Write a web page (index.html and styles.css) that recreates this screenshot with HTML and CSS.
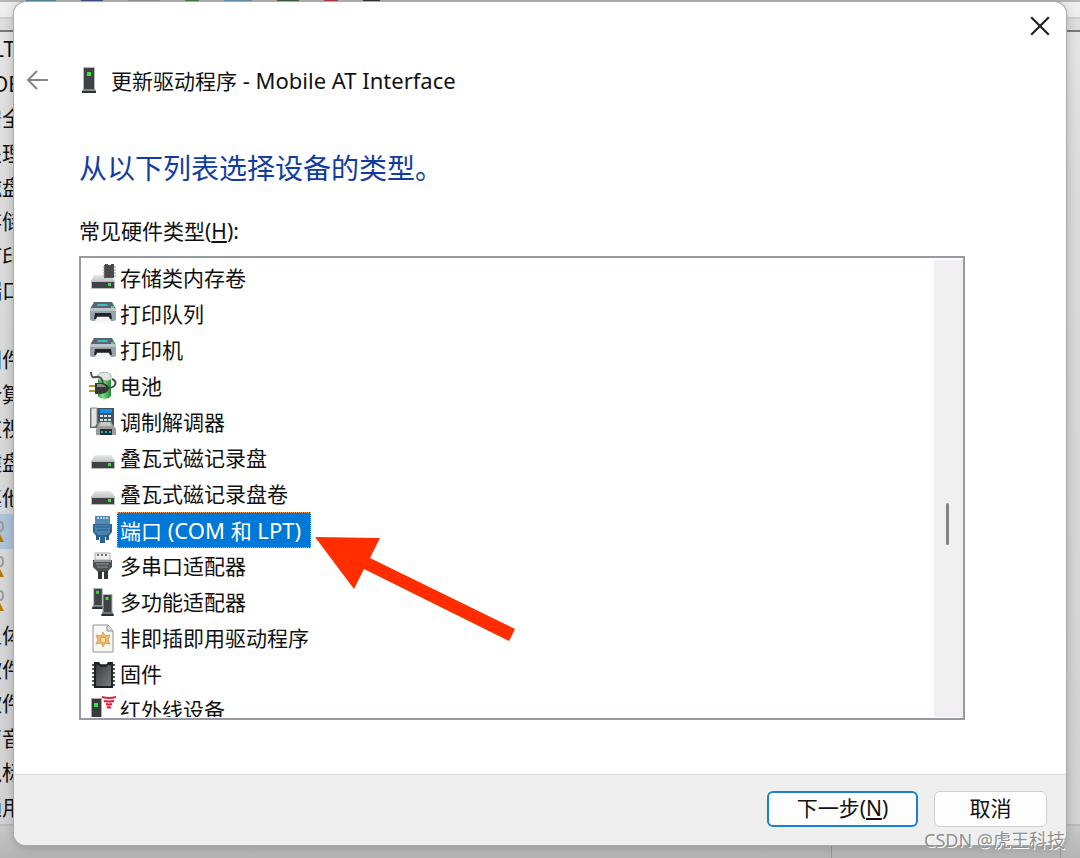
FILE: index.html
```html
<!DOCTYPE html>
<html lang="zh-CN">
<head>
<meta charset="utf-8">
<meta name="viewport" content="width=device-width, initial-scale=1">
<title>更新驱动程序</title>
<link rel="stylesheet" href="styles.css">
</head>
<body>
<svg class="defs" aria-hidden="true">
  <defs>
    <linearGradient id="lid" x1="0" y1="0" x2="0" y2="1"><stop offset="0" stop-color="#e9e9ea"/><stop offset="1" stop-color="#c3c5c7"/></linearGradient>
    <linearGradient id="dark" x1="0" y1="0" x2="1" y2="1"><stop offset="0" stop-color="#3a3b3c"/><stop offset="1" stop-color="#7c7d7e"/></linearGradient>
    <linearGradient id="cell" x1="0" y1="0" x2="1" y2="0"><stop offset="0" stop-color="#2b9a3c"/><stop offset=".35" stop-color="#7fe07f"/><stop offset="1" stop-color="#1f8a30"/></linearGradient>
    <symbol id="drive" viewBox="0 0 28 36">
      <path d="M6 15h16l4 6H2z" fill="url(#lid)"/>
      <path d="M2 21h24v8H2z" fill="#b9bcbe"/><path d="M3 22h22v6H3z" fill="#3f4142"/>
      <path d="M19 23h3v3h-3z" fill="#3be04a"/>
    </symbol>
    <symbol id="printer" viewBox="0 0 28 36">
      <path d="M5 6h18l4 7H1z" fill="#58676f"/><path d="M9 8h9l1 2H8z" fill="#38c3c0"/><path d="M22 10h3v2h-3z" fill="#42e05a"/>
      <path d="M1 12h26v12l-2 1H3l-2-1z" fill="#98a2ac"/><path d="M1 12h26v3H1z" fill="#bcc5cd"/>
      <path d="M6 17h16l1 6H5z" fill="#202325"/><path d="M8 21h12l3 6H5z" fill="#f4f5f6"/><path d="M8 20h12v1H8z" fill="#55595c"/>
    </symbol>
    <symbol id="tower" viewBox="0 0 12 22">
      <path d="M1 0h10v18H1z" fill="#aeb5b9"/><path d="M2 1h8v17H2z" fill="#3f4142"/>
      <path d="M4 3h3v3H4z" fill="#39e33e"/><path d="M1 18h10l1 2v2H0v-2z" fill="#6f7578"/><path d="M0 20h12v2H0z" fill="#2c2e2f"/>
    </symbol>
    <symbol id="device" viewBox="0 0 14 34">
      <path d="M0 8c4 0 4 9 0 9" fill="none" stroke="#999" stroke-width="2"/><path d="M0 20l4 8H0z" fill="#b87900"/>
    </symbol>
  </defs>
</svg>

<div class="backdrop" aria-hidden="true">
  <div class="tool-strip"><i class="teal"></i><i class="navy"></i><i class="line"></i><i class="green"></i><i class="sky"></i><i class="forest"></i><i class="red"></i><i class="black"></i></div>
  <div class="tree">
    <span class="latin">LT</span><span class="latin">DE</span><span>安全</span><span>处理</span><span>磁盘</span><span>存储</span><span>打印</span><span>端口</span><span></span><span>固件</span><span>计算</span><span>监视</span><span>键盘</span><span>其他</span>
    <span class="picked device"><svg><use href="#device"/></svg></span>
    <span class="device"><svg><use href="#device"/></svg></span>
    <span class="device"><svg><use href="#device"/></svg></span>
    <span>人体</span><span>软件</span><span>软件</span><span>声音</span><span>鼠标</span><span>通用</span>
  </div>
  <div class="status"><i></i><i></i></div>
</div>

<main class="dialog" role="dialog" aria-labelledby="title">
  <header class="caption">
    <button class="close" type="button" aria-label="关闭"><svg viewBox="0 0 20 20"><path d="M2 2l16 16M18 2L2 18" fill="none" stroke="#222" stroke-width="2"/></svg></button>
  </header>
  <div class="title-row">
    <button class="back" type="button" aria-label="返回"><svg viewBox="0 0 24 24"><path d="M22 12H3M11 3l-9 9 9 9" fill="none" stroke="#858585" stroke-width="2"/></svg></button>
    <svg class="title-icon" viewBox="0 0 14 26"><path d="M1 0h12v23H1z" fill="#b4babd"/><path d="M2 1h10v21H2z" fill="#404142"/><path d="M5 5h4v4H5z" fill="#33ee38"/><path d="M1 22h12l1 2v2H0v-2z" fill="#858b8e"/><path d="M0 24h14v2H0z" fill="#303233"/></svg>
    <h1 id="title" class="title">更新驱动程序<span class="latin-text"> - Mobile AT Interface</span></h1>
  </div>

  <section class="content">
    <h2 class="heading">从以下列表选择设备的类型。</h2>
    <div id="types-label" class="list-label">常见硬件类型(<u>H</u>):</div>
    <div class="listbox">
      <ul class="items" role="listbox" aria-labelledby="types-label" tabindex="0">
        <li class="item" role="option"><svg class="icon" viewBox="0 0 28 36"><path d="M5 15h16l5 6H2z" fill="url(#lid)"/><path d="M15 5h10v13H15z" fill="#555"/><path d="M14 7h13M14 10h13M14 13h13M14 16h13" stroke="#8b8b8b" stroke-width="1"/><path d="M16 4h3v2h3V4h3v13h-9z" fill="#4a4a4a"/><path d="M2 21h24v8H2z" fill="#b9bcbe"/><path d="M3 22h22v6H3z" fill="#3f4142"/><path d="M19 23h3v3h-3z" fill="#3be04a"/></svg><span class="name">存储类内存卷</span></li>
        <li class="item" role="option"><svg class="icon"><use href="#printer"/></svg><span class="name">打印队列</span></li>
        <li class="item" role="option"><svg class="icon"><use href="#printer"/></svg><span class="name">打印机</span></li>
        <li class="item" role="option"><svg class="icon" viewBox="0 0 28 36"><path d="M9 9c0-6 13-6 13 0v18c0 5-13 5-13 0z" fill="url(#cell)"/><path d="M9 8c0-5 13-5 13 0v3c-2 2-11 2-13 0z" fill="#e1e8e3" stroke="#a9b3ab"/><path d="M2 4c0 5 2 6 5 5 4-1 7 2 7 7M23 11c5 2 5 8-3 9" fill="none" stroke="#4b504c" stroke-width="2"/><path d="M6 15h5c5 0 9 2 9 5s-4 6-9 6H6z" fill="#343836"/><path d="M8 16h3c3 0 5 1 6 3H8z" fill="#8a8f8c"/><path d="M0 17h6v2H0zM0 22h6v2H0z" fill="#b79427"/></svg><span class="name">电池</span></li>
        <li class="item" role="option"><svg class="icon" viewBox="0 0 28 36"><path d="M1 4h24v20H1z" fill="#45515a"/><path d="M2 4h6v16l-2 3H2z" fill="#e1e3e5" stroke="#818a90"/><path d="M11 5h12v4H11z" fill="#168de8"/><path d="M11 11h3v2h-3zM15 11h3v2h-3zM19 11h3v2h-3zM11 15h3v2h-3zM15 15h3v2h-3zM19 15h3v2h-3z" fill="#d9e2e7"/><path d="M10 18h12l5 7v6H7v-6z" fill="#9b9b9a"/><path d="M12 18h9l2 4H10z" fill="#c7c7c5"/><path d="M11 25h12v6H11z" fill="#252b2f"/><path d="M12 27h2v2h-2zM16 27h2v2h-2zM20 27h2v2h-2z" fill="#16b5cf"/><path d="M21 18h2v2h-2z" fill="#37e145"/></svg><span class="name">调制解调器</span></li>
        <li class="item" role="option"><svg class="icon"><use href="#drive"/></svg><span class="name">叠瓦式磁记录盘</span></li>
        <li class="item" role="option"><svg class="icon"><use href="#drive"/></svg><span class="name">叠瓦式磁记录盘卷</span></li>
        <li class="item selected" role="option" aria-selected="true"><svg class="icon" viewBox="0 0 28 36"><path d="M6 4h15v8H6z" fill="#5389b3"/><path d="M8 5h2v2H8zM11 5h2v2h-2zM14 5h2v2h-2zM17 5h2v2h-2z" fill="#b6d1e3"/><path d="M4 12h19v8l-4 5h-3v6h-5v-6H8l-4-5z" fill="#2c6594"/><path d="M6 13h15v7l-3 3H9l-3-3z" fill="#4782b0"/><path d="M7 15h13M8 18h11" stroke="#265c88"/><path d="M7 23h3v5H7zM17 23h3v5h-3z" fill="#255d8c"/></svg><span class="name">端口<span class="latin-text"> (COM </span>和<span class="latin-text"> LPT)</span></span></li>
        <li class="item" role="option"><svg class="icon" viewBox="0 0 28 36"><path d="M6 5h15v7H6z" fill="#eeeeee" stroke="#aaa"/><path d="M8 6h2v2H8zM12 6h2v2h-2zM16 6h2v2h-2z" fill="#777"/><path d="M4 12h19v7l-5 5H9l-5-5z" fill="#4f5152"/><path d="M5 12h17v2H5z" fill="#969899"/><path d="M7 16h13M8 19h11" stroke="#929494"/><path d="M9 23h4v8H9zM15 23h4v8h-4z" fill="#353738"/></svg><span class="name">多串口适配器</span></li>
        <li class="item" role="option"><svg class="icon" viewBox="0 0 28 36"><use href="#tower" x="3" y="4" width="12" height="21"/><use href="#tower" x="12" y="10" width="13" height="22"/></svg><span class="name">多功能适配器</span></li>
        <li class="item" role="option"><svg class="icon" viewBox="0 0 28 36"><path d="M4 5h15l5 6v21H4z" fill="#f8f8f8" stroke="#929292"/><path d="M18 5v6h6" fill="#ddd" stroke="#929292"/><path d="M14 12l2 4 5-1-2 5 2 4-5-1-2 4-2-4-5 1 2-4-2-5 5 1z" fill="#edbd70" stroke="#dda350"/><circle cx="14" cy="20" r="3" fill="#f9dfae" stroke="#d69a42"/></svg><span class="name">非即插即用驱动程序</span></li>
        <li class="item" role="option"><svg class="icon" viewBox="0 0 28 36"><path d="M3 9h23M3 13h23M3 17h23M3 21h23M3 25h23M3 29h23" stroke="#555" stroke-width="2"/><path d="M5 6h5l2 3h5l2-3h5v26H5z" fill="#202122"/><path d="M7 9h3l2 2h5l2-2h3v21H7z" fill="url(#dark)"/></svg><span class="name">固件</span></li>
        <li class="item" role="option"><svg class="icon" viewBox="0 0 28 36"><path d="M2 6h11v22H2z" fill="#aaa"/><path d="M3 7h9v21H3z" fill="#383a3b"/><path d="M5 11h4v4H5z" fill="#31e64e"/><path d="M13 5q7 2 14 0M15 9q5 1 10 0M17 12q3 1 6 0M18 15q2 1 4 0" fill="none" stroke="#e21e3b" stroke-width="2"/></svg><span class="name">红外线设备</span></li>
      </ul>
      <div class="scrollbar" aria-hidden="true"><div class="thumb"></div></div>
    </div>
  </section>

  <footer class="actions">
    <button class="button primary" type="button">下一步(<u>N</u>)</button>
    <button class="button" type="button">取消</button>
  </footer>
</main>

<svg class="arrow" viewBox="0 0 200 104" aria-hidden="true"><path d="M0 0l65 1-10 20 145 71-6 12L49 32 39 52z" fill="#ff2d00"/></svg>
<div class="watermark">CSDN @虎王科技</div>
</body>
</html>
```

FILE: styles.css
```css
* { box-sizing: border-box; }

body {
  margin: 0;
  min-height: 100vh;
  padding: 2px 14px 13px;
  display: flex;
  position: relative;
  overflow: hidden;
  background: #bdbdbd;
  color: #111;
  font-family: "Noto Sans", "Noto Sans CJK SC", sans-serif;
  font-size: 21px;
}

h1, h2, ul { margin: 0; padding: 0; font-weight: 400; }
button { font: inherit; color: inherit; }
u { text-decoration-thickness: 2px; text-underline-offset: 2px; }

.defs { position: absolute; width: 0; height: 0; }
.latin-text { font-size: 22px; }

/* Window behind the dialog */
.backdrop {
  position: absolute;
  inset: 0;
  display: flex;
  flex-direction: column;
  background: linear-gradient(#e8e8e8, #dcdcdc 20%, #d2d2d2);
}
.tool-strip {
  height: 32px;
  flex: none;
  display: flex;
  gap: 25px;
  padding-left: 26px;
  background: linear-gradient(#b5b5b5 2px, #efefef 2px, #efefef 17px, #cfcfcf 17px, #cfcfcf 19px, #dedede 19px);
  border-bottom: 2px solid #777;
}
.tool-strip i { height: 2px; }
.tool-strip .teal { width: 30px; background: #558b95; }
.tool-strip .navy { width: 22px; background: #405293; }
.tool-strip .line { width: 32px; background: #999; }
.tool-strip .green { width: 14px; background: #43824a; }
.tool-strip .sky { width: 28px; background: #6497b7; }
.tool-strip .forest { width: 22px; background: #3f6044; }
.tool-strip .red { width: 14px; background: #b63a45; }
.tool-strip .black { width: 17px; background: #333; }
.tree {
  flex: 1;
  min-height: 0;
  width: 60px;
  display: grid;
  grid-auto-rows: 1fr;
}
.tree span {
  display: flex;
  align-items: center;
  min-height: 0;
  padding-left: 1px;
  text-indent: -20px;
  white-space: nowrap;
  line-height: 30px;
}
.tree .latin { text-indent: -8px; }
.tree .device { padding: 0; }
.tree .picked { background: #adc3d8; }
.tree svg { width: 14px; height: 34px; }
.status {
  height: 34px;
  flex: none;
  display: flex;
  justify-content: flex-end;
  gap: 228px;
  padding-right: 19px;
  border-top: 2px solid #bbb;
  background: linear-gradient(#cacaca, #b4b4b4);
}
.status i { width: 1px; background: #999; }

/* Dialog */
.dialog {
  flex: 1;
  min-width: 0;
  position: relative;
  display: flex;
  flex-direction: column;
  overflow: hidden;
  border-radius: 12px;
  background: #fff;
  box-shadow: 0 0 0 1px #aaa, 0 2px 12px rgba(0, 0, 0, .25);
}
.caption {
  height: 48px;
  display: flex;
  justify-content: flex-end;
  align-items: center;
  padding-right: 14px;
}
.close, .back {
  display: flex;
  padding: 0;
  border: 0;
  background: none;
}
.close { padding: 1px; }
.close svg { width: 22px; height: 22px; }
.back svg { width: 24px; height: 24px; }
.title-row {
  height: 60px;
  display: flex;
  align-items: center;
  padding-left: 12px;
}
.title-icon { width: 14px; height: 26px; margin: 0 15px 0 32px; }
.title { font-size: 21px; line-height: 30px; }

.content {
  flex: 1;
  display: flex;
  flex-direction: column;
  padding: 38px 101px 54px 65px;
}
.heading { font-size: 28px; line-height: 40px; color: #123d9f; }
.list-label { margin: 28px 0 10px; line-height: 30px; }

.listbox {
  flex: 1;
  min-height: 0;
  display: flex;
  padding: 2px 0 1px 8px;
  border: 2px solid #9599a0;
}
.items {
  flex: 1;
  height: 457px;
  overflow: hidden;
  list-style: none;
  outline: 0;
}
.item { height: 36px; display: flex; align-items: center; }
.icon { flex: none; width: 28px; height: 36px; }
.name {
  height: 36px;
  padding: 0 9px 0 2px;
  border: 1px solid transparent;
  line-height: 34px;
  white-space: nowrap;
}
.selected .name { background: #0078d7; border: 1px dotted #f0a060; color: #fff; }
.scrollbar {
  width: 29px;
  padding: 243px 0 0 12px;
  background: #f0f0f0;
}
.thumb { width: 3px; height: 42px; border-radius: 2px; background: #858585; }

.actions {
  height: 71px;
  display: flex;
  justify-content: flex-end;
  align-items: center;
  gap: 16px;
  padding: 0 19px 2px 0;
  border-top: 1px solid #dedede;
  background: #efefef;
}
.button {
  width: 113px;
  height: 36px;
  padding: 0 0 2px;
  border: 1px solid #cfcfcf;
  border-radius: 6px;
  background: #fdfdfd;
  line-height: 30px;
}
.primary { width: 151px; border: 2px solid #1b7fd0; }

/* Annotations over the dialog */
.arrow { position: absolute; left: 315px; top: 537px; width: 200px; height: 104px; }
.watermark {
  position: absolute;
  right: 15px;
  bottom: 6px;
  color: #8f8f8f;
  font-size: 18px;
  line-height: 24px;
  text-shadow: 1px 1px 0 #fff;
}
```
